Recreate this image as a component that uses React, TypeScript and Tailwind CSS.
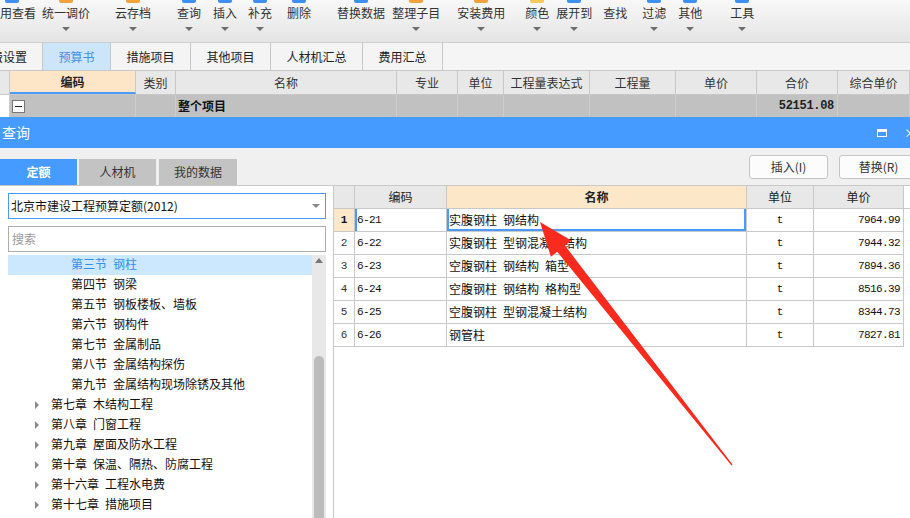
import React from 'react';

const tools = [
  { t: '费用查看', ml: 'ml-[-12px]', arrow: false, icon: 'bg-[#3f8ff0]' },
  { t: '统一调价', ml: 'ml-[6px]', arrow: true, icon: 'bg-[#f3a13a]' },
  { t: '云存档', ml: 'ml-[25px]', arrow: true, icon: 'bg-[#f3a13a]' },
  { t: '查询', ml: 'ml-[26px]', arrow: true, icon: 'bg-[#3f8ff0]' },
  { t: '插入', ml: 'ml-[12px]', arrow: true, icon: 'bg-[#3f8ff0]' },
  { t: '补充', ml: 'ml-[11px]', arrow: true, icon: 'bg-[#3f8ff0]' },
  { t: '删除', ml: 'ml-[15px]', arrow: false, icon: 'bg-[#3f8ff0]' },
  { t: '替换数据', ml: 'ml-[26px]', arrow: false, icon: 'bg-[#3f8ff0]' },
  { t: '整理子目', ml: 'ml-[7px]', arrow: true, icon: 'bg-[#f3a13a]' },
  { t: '安装费用', ml: 'ml-[17px]', arrow: true, icon: 'bg-[#f3a13a]' },
  { t: '颜色', ml: 'ml-[20px]', arrow: true, icon: 'bg-[#f7c95a]' },
  { t: '展开到', ml: 'ml-[7px]', arrow: true, icon: 'bg-[#3f8ff0]' },
  { t: '查找', ml: 'ml-[11px]', arrow: false, icon: 'bg-transparent' },
  { t: '过滤', ml: 'ml-[15px]', arrow: true, icon: 'bg-[#3f8ff0]' },
  { t: '其他', ml: 'ml-[12px]', arrow: true, icon: 'bg-[#3f8ff0]' },
  { t: '工具', ml: 'ml-[28px]', arrow: true, icon: 'bg-[#3f8ff0]' },
];

const pageTabs = [
  { t: '预算书', w: 'w-[68px]', active: true },
  { t: '措施项目', w: 'w-[80px]' },
  { t: '其他项目', w: 'w-[80px]' },
  { t: '人材机汇总', w: 'w-[92px]' },
  { t: '费用汇总', w: 'w-[80px]' },
];

const gridCols = [
  { t: '', w: 'w-[10px]' },
  { t: '编码', w: 'w-[126px]', active: true },
  { t: '类别', w: 'w-[40px]' },
  { t: '名称', w: 'w-[221px]' },
  { t: '专业', w: 'w-[61px]' },
  { t: '单位', w: 'w-[46px]' },
  { t: '工程量表达式', w: 'w-[86px]' },
  { t: '工程量', w: 'w-[86px]' },
  { t: '单价', w: 'w-[81px]' },
  { t: '合价', w: 'w-[81px]' },
  { t: '综合单价', w: 'w-[72px]' },
];

const sections = [
  '第三节 钢柱',
  '第四节 钢梁',
  '第五节 钢板楼板、墙板',
  '第六节 钢构件',
  '第七节 金属制品',
  '第八节 金属结构探伤',
  '第九节 金属结构现场除锈及其他',
];

const chapters = [
  '第七章 木结构工程',
  '第八章 门窗工程',
  '第九章 屋面及防水工程',
  '第十章 保温、隔热、防腐工程',
  '第十六章 工程水电费',
  '第十七章 措施项目',
];

const rows = [
  ['6-21', '实腹钢柱 钢结构', '7964.99'],
  ['6-22', '实腹钢柱 型钢混凝土结构', '7944.32'],
  ['6-23', '空腹钢柱 钢结构 箱型', '7894.36'],
  ['6-24', '空腹钢柱 钢结构 格构型', '8516.39'],
  ['6-25', '空腹钢柱 型钢混凝土结构', '8344.73'],
  ['6-26', '钢管柱', '7827.81'],
];

// SimSun style half-width gap between words
const sp = (s: string) => s.split(' ').join('\u2002');

function Toolbar() {
  return (
    <div className="h-[43px] shrink-0 flex items-start overflow-hidden border-b border-[#cfcfcf] bg-gradient-to-b from-[#f8f8f8] to-[#e4e4e4]">
      {tools.map((it) => (
        <div key={it.t} className={`${it.ml} flex flex-col items-center shrink-0`}>
          <div className={`h-[3px] w-[14px] rounded-b-[2px] ${it.icon}`} />
          <div className="mt-[3px] text-[12px] leading-[14px] text-[#333] whitespace-nowrap">{it.t}</div>
          <div className="mt-[7px] h-[4px]">
            {it.arrow && <div className="border-x-[4px] border-x-transparent border-t-[4px] border-t-[#6e6e6e]" />}
          </div>
        </div>
      ))}
    </div>
  );
}

function PageTabs() {
  return (
    <div className="h-[28px] shrink-0 flex bg-[#f5f5f5] border-b border-[#c8c8c8]">
      <div className="w-[43px] shrink-0 flex items-center justify-end pr-[15px] overflow-hidden border-r border-[#c8c8c8] bg-[#f4f4f4]">
        <span className="whitespace-nowrap shrink-0 text-[#222]">取费设置</span>
      </div>
      {pageTabs.map((tb) => (
        <div
          key={tb.t}
          className={`${tb.w} shrink-0 flex items-center justify-center border-r border-[#c8c8c8] ${
            tb.active ? 'bg-[#cde5f8] text-[#3f8fe6]' : 'bg-[#f4f4f4] text-[#222]'
          }`}
        >
          {tb.t}
        </div>
      ))}
    </div>
  );
}

function MainGrid() {
  return (
    <>
      <div className="h-[24px] shrink-0 flex bg-[#e8e8e8] border-b border-[#c8c8c8]">
        {gridCols.map((c, i) => (
          <div
            key={i}
            className={`${c.w} shrink-0 flex items-center justify-center border-r border-[#c8c8c8] ${
              c.active ? 'bg-[#fde6c8] font-bold border-b-2 border-b-[#4a9bff] text-[#222]' : 'text-[#333]'
            }`}
          >
            {c.t}
          </div>
        ))}
      </div>
      <div className="h-[22px] shrink-0 flex bg-[#c1c1c1]">
        {gridCols.map((c, i) => (
          <div
            key={i}
            className={`${c.w} shrink-0 flex items-center border-r border-[#cdcdcd] ${i === 0 ? 'bg-white' : ''} ${
              i === 9 ? 'justify-end pr-[3px]' : ''
            }`}
          >
            {i === 1 && (
              <div className="ml-[2px] w-[13px] h-[13px] bg-white border border-[#777] flex items-center justify-center">
                <div className="w-[7px] h-[1px] bg-[#222]" />
              </div>
            )}
            {i === 3 && <span className="ml-[2px] font-bold text-[#111]">整个项目</span>}
            {i === 9 && (
              <span className="font-bold text-[#222] font-['Liberation_Mono',monospace] text-[12px] tracking-[-0.3px]">
                52151.08
              </span>
            )}
          </div>
        ))}
      </div>
    </>
  );
}

function TitleBar() {
  return (
    <div className="h-[31px] shrink-0 flex items-center bg-[#459bff]">
      <span className="ml-[2px] text-[14px] text-white">查询</span>
      <div className="ml-auto mr-[17px] w-[10px] h-[8px] border border-white border-t-[3px]" />
      <span className="mr-[-6px] text-white text-[12px] leading-none">×</span>
    </div>
  );
}

function QueryBand() {
  return (
    <div className="h-[37px] shrink-0 flex items-start overflow-hidden bg-[#f0f0f0]">
      <div className="mt-[11px] w-[77px] h-[26px] shrink-0 flex items-center justify-center bg-[#459bff] text-white font-bold">
        定额
      </div>
      <div className="mt-[11px] ml-[2px] w-[77px] h-[26px] shrink-0 flex items-center justify-center bg-[#c3c3c3] text-[#333]">
        人材机
      </div>
      <div className="mt-[11px] ml-[3px] w-[78px] h-[26px] shrink-0 flex items-center justify-center bg-[#c3c3c3] text-[#333]">
        我的数据
      </div>
      <button className="mt-[7px] ml-[512px] w-[79px] h-[24px] shrink-0 bg-[#fcfcfc] border border-[#c4c4c4] rounded-[3px] text-[12px] text-[#333]">
        插入(I)
      </button>
      <button className="mt-[7px] ml-[11px] w-[79px] h-[24px] shrink-0 bg-[#fcfcfc] border border-[#c4c4c4] rounded-[3px] text-[12px] text-[#333]">
        替换(R)
      </button>
    </div>
  );
}

function LeftPanel() {
  return (
    <div className="w-[333px] shrink-0 flex flex-col pl-[8px] pr-[7px] pt-[7px] bg-white overflow-hidden">
      <div className="h-[26px] shrink-0 flex items-center pl-[2px] pr-[5px] border border-[#4a9bff]">
        <span className="text-[#111]">北京市建设工程预算定额(2012)</span>
        <div className="ml-auto border-x-[4px] border-x-transparent border-t-[4px] border-t-[#888]" />
      </div>
      <div className="mt-[7px] h-[26px] shrink-0 flex items-center pl-[3px] border border-[#adadad] text-[#9a9a9a]">
        搜索
      </div>
      <div className="mt-[3px] flex-1 flex min-h-0">
        <div className="w-[304px] shrink-0 overflow-hidden">
          {sections.map((s, i) => (
            <div
              key={s}
              className={`h-[20px] leading-[18px] pl-[63px] whitespace-nowrap ${
                i === 0 ? 'bg-[#cce8ff] text-[#2f8ff0]' : 'text-[#111]'
              }`}
            >
              {sp(s)}
            </div>
          ))}
          {chapters.map((c) => (
            <div key={c} className="h-[20px] flex items-center pb-[2px] pl-[27px] whitespace-nowrap text-[#111]">
              <div className="mt-[2px] border-y-[4px] border-y-transparent border-l-[4px] border-l-[#8a8a8a]" />
              <span className="ml-[12px]">{sp(c)}</span>
            </div>
          ))}
          <div className="h-[20px] flex items-center pb-[2px] pl-[22px] whitespace-nowrap text-[#111]">{sp('附录 其他')}</div>
        </div>
        <div className="w-[14px] shrink-0 flex flex-col items-center bg-[#e8e8e8]">
          <div className="mt-[3px] border-x-[4px] border-x-transparent border-b-[5px] border-b-[#777]" />
          <div className="mt-[93px] w-[10px] flex-1 rounded-t-full bg-[#bcbcbc]" />
        </div>
      </div>
    </div>
  );
}

function RightTable() {
  return (
    <div className="flex-1 flex flex-col bg-white border-l border-[#c8c8c8] overflow-hidden">
      <div className="h-[23px] shrink-0 flex border-b border-[#c8c8c8] text-[#222]">
        <div className="w-[21px] shrink-0 bg-[#e8e8e8] border-r border-[#c8c8c8]" />
        <div className="w-[92px] shrink-0 flex items-center justify-center bg-[#e8e8e8] border-r border-[#c8c8c8]">编码</div>
        <div className="w-[300px] shrink-0 flex items-center justify-center bg-[#fde7c9] font-bold border-r border-[#c8c8c8]">名称</div>
        <div className="w-[67px] shrink-0 flex items-center justify-center bg-[#e8e8e8] border-r border-[#c8c8c8]">单位</div>
        <div className="w-[90px] shrink-0 flex items-center justify-center bg-[#e8e8e8] border-r border-[#c8c8c8]">单价</div>
      </div>
      {rows.map((r, i) => (
        <div key={r[0]} className="h-[23px] shrink-0 flex">
          <div
            className={`w-[21px] shrink-0 flex items-center justify-center border-r border-b border-[#c8c8c8] font-['Liberation_Mono',monospace] text-[11px] ${
              i === 0 ? 'bg-[#fde7c9] font-bold text-[#111]' : 'text-[#333]'
            }`}
          >
            {i + 1}
          </div>
          <div
            className={`w-[92px] shrink-0 flex items-center pl-[2px] border-r border-b border-[#c8c8c8] font-['Liberation_Mono',monospace] text-[11px] tracking-[-0.6px] text-[#111] ${
              i === 0 ? 'shadow-[inset_2px_0_0_#4a9bff]' : ''
            }`}
          >
            {r[0]}
          </div>
          <div
            className={`w-[300px] shrink-0 flex items-center pl-[2px] border-r border-b border-[#c8c8c8] whitespace-nowrap text-[#111] ${
              i === 0 ? 'shadow-[inset_2px_-2px_0_#4a9bff,inset_-2px_0_0_#4a9bff]' : ''
            }`}
          >
            {sp(r[1])}
          </div>
          <div className="w-[67px] shrink-0 flex items-center justify-center border-r border-b border-[#c8c8c8] font-['Liberation_Mono',monospace] text-[11px] text-[#111]">
            t
          </div>
          <div className="w-[90px] shrink-0 flex items-center justify-end pr-[3px] border-r border-b border-[#c8c8c8] font-['Liberation_Mono',monospace] text-[11px] tracking-[-0.6px] text-[#111]">
            {r[2]}
          </div>
        </div>
      ))}
    </div>
  );
}

export default function App() {
  return (
    <div className="relative w-[910px] h-[518px] flex flex-col overflow-hidden bg-white text-[12px] font-['Noto_Sans_CJK_SC','Noto_Sans',sans-serif]">
      <Toolbar />
      <PageTabs />
      <MainGrid />
      <TitleBar />
      <QueryBand />
      <div className="flex-1 flex min-h-0 border-t border-[#c8c8c8]">
        <LeftPanel />
        <RightTable />
      </div>

      {/* annotation arrow over the table */}
      <svg className="absolute inset-0 pointer-events-none" width="910" height="518" viewBox="0 0 910 518">
        <polygon
          points="540,222 571.3,240.6 565,245.6 732.5,464.6 731.5,465.4 557.2,251.8 550.9,256.8"
          fill="#fa2a1e"
        />
      </svg>
    </div>
  );
}
